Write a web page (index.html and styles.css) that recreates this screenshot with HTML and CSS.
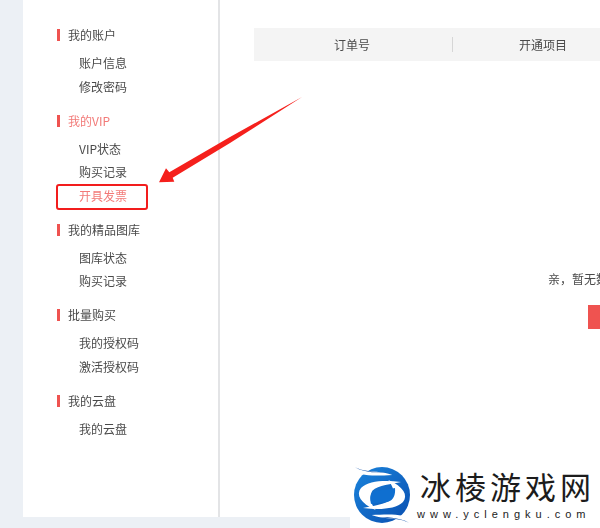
FILE: index.html
```html
<!DOCTYPE html>
<html lang="zh-CN">
<head>
<meta charset="utf-8">
<title>我的VIP</title>
<link rel="stylesheet" href="styles.css">
</head>
<body>
<div class="page">
  <aside class="sidebar">
    <section class="group">
      <h3 class="group-title">我的账户</h3>
      <a class="item">账户信息</a>
      <a class="item">修改密码</a>
    </section>
    <section class="group">
      <h3 class="group-title active">我的VIP</h3>
      <a class="item">VIP状态</a>
      <a class="item">购买记录</a>
      <a class="item active">开具发票</a>
    </section>
    <section class="group">
      <h3 class="group-title">我的精品图库</h3>
      <a class="item">图库状态</a>
      <a class="item">购买记录</a>
    </section>
    <section class="group">
      <h3 class="group-title">批量购买</h3>
      <a class="item">我的授权码</a>
      <a class="item">激活授权码</a>
    </section>
    <section class="group">
      <h3 class="group-title">我的云盘</h3>
      <a class="item">我的云盘</a>
    </section>
  </aside>
  <main class="main">
    <div class="table-head">
      <div class="col col-order">订单号</div>
      <div class="col col-project">开通项目</div>
    </div>
    <div class="empty">
      <p class="empty-text">亲，暂无数据</p>
      <div class="empty-btn"></div>
    </div>
  </main>
</div>

<div class="highlight"></div>
<svg class="arrow" width="160" height="100" viewBox="0 0 160 100" aria-hidden="true">
  <polygon points="152,2 80,42 19.3,77.3 16,73.3 9,87.3 24.3,86.7 22.7,82.7 80,48" fill="#f5201c"/>
</svg>

<div class="logo">
  <svg class="logo-mark" width="75" height="68" viewBox="0 0 225 204" aria-hidden="true">
    <defs>
      <linearGradient id="ball" x1="0" y1="0" x2="1" y2="1">
        <stop offset="0" stop-color="#1a84dc"/>
        <stop offset="1" stop-color="#0a4fb0"/>
      </linearGradient>
      <g id="half">
        <path d="M168 66 C120 60 70 62 48 84 C32 104 46 130 92 150 C78 130 70 112 82 92 C100 76 140 72 168 66Z" fill="#fff"/>
        <path d="M30 22 C70 40 105 30 142 45 C105 47 72 48 50 43 C46 36 40 30 30 22Z" fill="#fff"/>
        <path d="M30 22 C52 34 90 36 136 40 C100 38 60 40 30 22Z" fill="#0c4ea8"/>
      </g>
    </defs>
    <circle cx="111" cy="105" r="84" fill="url(#ball)"/>
    <use href="#half"/>
    <use href="#half" transform="rotate(180 111 105)"/>
    <path d="M150 84 C152 104 146 122 126 126 C110 129 92 127 78 132 C74 114 76 100 90 94 C108 88 130 90 150 84Z" fill="#0f6fd0"/>
  </svg>
  <div class="logo-name">冰棱游戏网</div>
  <div class="logo-url">www.yclengku.com</div>
</div>
</body>
</html>
```

FILE: styles.css
```css
* { box-sizing: border-box; }

html, body {
  margin: 0;
  height: 100%;
  overflow: hidden;
}

body {
  background: #ecf0f5;
  font-family: "Noto Sans CJK SC", "Liberation Sans", sans-serif;
  font-size: 12px;
  color: #4a4a4a;
}

.page {
  display: flex;
  width: 600px;
  height: 517px;
  padding-left: 23px;
  filter: blur(0.35px);
}

.sidebar {
  flex: 0 0 197px;
  background: #fff;
  border-right: 2px solid #e3e4e6;
  padding: 23px 0 0 34px;
}

.group { margin-bottom: 10.5px; }

.group-title {
  display: flex;
  align-items: center;
  height: 24px;
  margin: 0 0 4px;
  font-size: 12px;
  font-weight: 400;
  line-height: 24px;
  color: #4a4a4a;
}

.group-title::before {
  content: "";
  flex: none;
  width: 3px;
  height: 12px;
  margin-right: 8px;
  background: #ef5350;
}

.group-title.active { color: #f27a78; }

.item {
  display: block;
  height: 23.5px;
  padding-left: 22px;
  line-height: 23.5px;
  color: #4a4a4a;
}

.item.active { color: #f27a78; }

.main {
  flex: 1;
  min-width: 0;
  background: #fff;
  padding: 28px 0 0 34px;
}

.table-head {
  display: flex;
  align-items: center;
  height: 33px;
  background: #f4f4f4;
}

.col {
  text-align: center;
  line-height: 15px;
}

.col-order {
  flex: 0 0 199px;
  padding-right: 2px;
  border-right: 1px solid #d6d6d6;
}

.col-project { flex: 0 0 180px; }

.empty {
  display: flex;
  flex-direction: column;
  align-items: flex-start;
  padding: 209px 0 0 294px;
}

.empty-text {
  margin: 0;
  line-height: 18px;
  white-space: nowrap;
}

.empty-btn {
  flex: none;
  width: 120px;
  height: 24px;
  margin: 17px 0 0 40px;
  background: #ef5350;
}

.highlight {
  position: absolute;
  left: 56px;
  top: 183.5px;
  width: 92px;
  height: 26px;
  border: 2px solid #f21d1d;
  border-radius: 3px;
}

.arrow {
  position: absolute;
  left: 150px;
  top: 95px;
}

.logo {
  position: absolute;
  right: 0;
  bottom: 0;
  width: 250px;
  height: 68px;
  background: #fff;
}

.logo-mark {
  position: absolute;
  left: -5px;
  top: 0;
}

.logo-name {
  position: absolute;
  left: 70px;
  top: 4px;
  font-size: 31px;
  line-height: 44px;
  letter-spacing: 4px;
  color: #1c1c1c;
  white-space: nowrap;
}

.logo-url {
  position: absolute;
  left: 67px;
  top: 47px;
  font-family: "Liberation Sans", sans-serif;
  font-size: 11px;
  line-height: 14px;
  letter-spacing: 5px;
  color: #222;
  white-space: nowrap;
}
```
